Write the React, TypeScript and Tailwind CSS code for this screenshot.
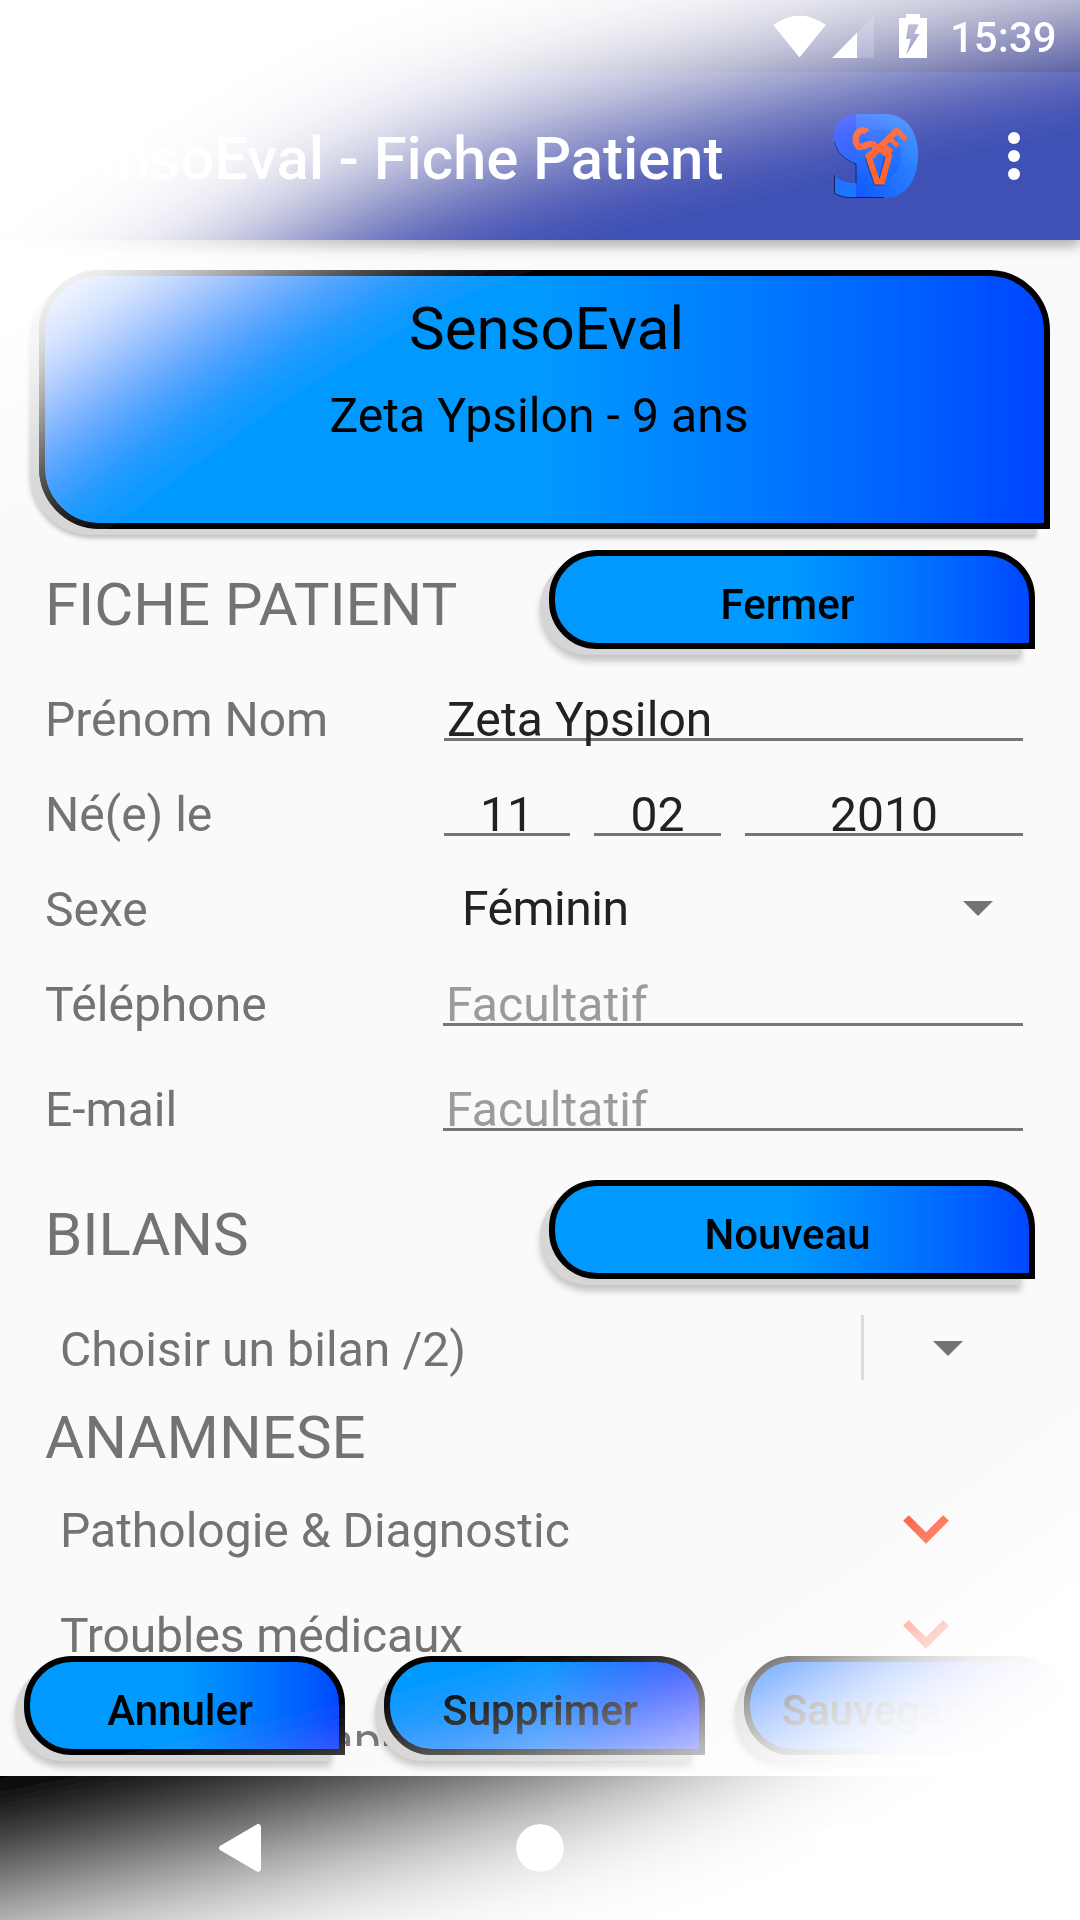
import type { ReactNode } from "react";

const WIDTH = 1080;
const HEIGHT = 1920;
const STRIP = 40;

// edge of the light falling on the bottom right corner, the top left one mirrors it
const GLOW_EDGE = [
  [-240, 1975],
  [0, 1930],
  [250, 1880],
  [540, 1812],
  [710, 1755],
  [900, 1640],
  [1080, 1508],
  [1320, 1325],
];

function edgeAt(x: number) {
  let i = 0;
  while (i < GLOW_EDGE.length - 2 && GLOW_EDGE[i + 1][0] < x) i++;
  const [x0, y0] = GLOW_EDGE[i];
  const [x1, y1] = GLOW_EDGE[i + 1];
  return y0 + ((x - x0) / (x1 - x0)) * (y1 - y0);
}

const strips = Array.from({ length: 39 }, (_, i) => {
  const x = -240 + i * STRIP;
  return { x, y: edgeAt(x + STRIP / 2) };
});

function GlowFilter() {
  return (
    <svg className="absolute h-0 w-0" aria-hidden="true">
      <filter
        id="glow"
        filterUnits="userSpaceOnUse"
        primitiveUnits="userSpaceOnUse"
        x={-240}
        y={-240}
        width={WIDTH + 480}
        height={HEIGHT + 480}
        colorInterpolationFilters="linearRGB"
      >
        {strips.map(({ x, y }) => (
          <feFlood key={`b${x}`} result={`b${x}`} x={x} y={y} width={STRIP} height={HEIGHT + 240 - y} floodColor="#fff" />
        ))}
        {strips.map(({ x, y }) => (
          <feFlood key={`t${x}`} result={`t${x}`} x={WIDTH - x - STRIP} y={-240} width={STRIP} height={HEIGHT - y + 240} floodColor="#fff" />
        ))}
        <feMerge result="shape">
          {strips.map(({ x }) => (
            <feMergeNode key={`b${x}`} in={`b${x}`} />
          ))}
          {strips.map(({ x }) => (
            <feMergeNode key={`t${x}`} in={`t${x}`} />
          ))}
        </feMerge>
        <feGaussianBlur in="shape" stdDeviation={61} result="light" />
        <feMerge>
          <feMergeNode in="SourceGraphic" />
          <feMergeNode in="light" />
        </feMerge>
      </filter>
    </svg>
  );
}

function StatusBar() {
  return (
    <div className="flex h-[72px] items-center bg-[#303f9f] pl-[773px] text-white">
      <svg className="h-[44px] w-[53px]" viewBox="0 0 53 44" fill="currentColor">
        <path d="M0 11Q26.500 -8 53 11L26.500 43.500Z" />
      </svg>
      <svg className="ml-[6px] h-[44px] w-[42px]" viewBox="0 0 42 44" fill="currentColor">
        <path d="M42 1V44H0Z" opacity=".3" />
        <path d="M25 18.500V44H0Z" />
      </svg>
      <svg className="ml-[25px] h-[44px] w-[28px]" viewBox="0 0 28 44" fill="currentColor" fillRule="evenodd">
        <path d="M7 0H21V4H28V44H0V4H7ZM9.500 10.500L7 25H12L7.500 40L20.500 20H15L19.500 10.500Z" />
      </svg>
      <span className="ml-[23px] pt-[3px] text-[42px] leading-[60px] font-medium">15:39</span>
    </div>
  );
}

function Logo() {
  return (
    <svg className="h-[84px] w-[84px]" viewBox="0 0 84 84">
      <defs>
        <linearGradient id="logoS" x1="0" y1="0" x2="0" y2="1">
          <stop offset="0" stopColor="#2450ff" />
          <stop offset="1" stopColor="#1f78ff" />
        </linearGradient>
        <linearGradient id="logoD" x1="1" y1="0" x2="0" y2="1">
          <stop offset="0" stopColor="#3a96ff" />
          <stop offset="1" stopColor="#1158ff" />
        </linearGradient>
      </defs>
      <path d="M22 0C8 1 0 10 0 23C0 38 10 45 22 50V69C13 69 6 67 0 61V79Q6 84 22 84Z" fill="url(#logoS)" />
      <path d="M22 0H51C72 0 84 17 84 41C84 65 72 84 51 84H22Z" fill="url(#logoD)" />
      <path d="M.5 28C3 40 12 46 22 50V69M.5 61V79Q7 83.500 16 83.500H50" fill="none" stroke="#14235f" />
      <path d="M18 26C16 18 24 15 34 15H49C61 17 67 28 67 42C67 54 60 64 47 68V40Z" fill="#1468ff" opacity=".6" />
      <g fill="none" stroke="#14235f" opacity=".5" transform="translate(-1 1)">
        <path d="M34.500 42L43 67.500H48L54.500 42" strokeWidth="6" />
      </g>
      <g fill="none" stroke="#ff6530">
        <path d="M33 18C29 13 20 19 22 28C25 40 34 26 40 31C44 35 40 39 37 43" strokeWidth="6.500" />
        <path d="M40 39L64 15.500" strokeWidth="6.500" />
        <path d="M61.500 15L72 25.500M54 23L64 32M47 30L58 38" strokeWidth="5" />
        <path d="M34.500 42L43 67.500H48L55 42L45 34Z" strokeWidth="6" />
      </g>
    </svg>
  );
}

function AppBar() {
  return (
    <header className="relative z-10 flex h-[168px] items-center bg-[#3f51b5] pl-[48px] text-white shadow-[0_6px_12px_rgba(0,0,0,0.3)]">
      <h1 className="w-[786px] pt-[5px] text-[60px] leading-[72px] font-medium tracking-[-0.12px]">SensoEval - Fiche Patient</h1>
      <Logo />
      <div className="ml-[90px] flex flex-col gap-[6px]">
        <i className="h-3 w-3 rounded-full bg-white" />
        <i className="h-3 w-3 rounded-full bg-white" />
        <i className="h-3 w-3 rounded-full bg-white" />
      </div>
    </header>
  );
}

function Pill({ children }: { children: ReactNode }) {
  return (
    <button className="relative block h-[105px] w-full pb-[6px] pl-[9px] text-black">
      <span className="absolute top-[9px] right-[14px] bottom-0 left-0 rounded-[48px] rounded-br-none bg-[#d6d6d6] shadow-[0_6px_7px_rgba(0,0,0,0.22)]" />
      <span className="relative flex h-[99px] items-center justify-center rounded-[48px] rounded-br-none border-[6px] border-black bg-linear-to-r from-[#0099ff] via-[#0099ff] via-50% to-[#0044ff] bg-origin-border pt-[11px] pr-[9px] text-[42px] leading-[50px] font-medium">
        {children}
      </span>
    </button>
  );
}

function PatientCard() {
  return (
    <section className="relative pb-[6px] pl-[9px]">
      <div className="absolute top-[9px] right-[14px] bottom-0 left-0 rounded-[61px] rounded-br-none bg-[#d6d6d6] shadow-[0_3px_5px_rgba(0,0,0,0.25)]" />
      <div className="relative flex h-[259px] flex-col items-center rounded-[61px] rounded-br-none border-[6px] border-black bg-linear-to-r from-[#0099ff] via-[#0099ff] via-50% to-[#0044ff] pt-[23px] text-black">
        <h2 className="pl-[4px] text-[60px] leading-[60px]">SensoEval</h2>
        <p className="mt-[27px] pr-[11px] text-[48px] leading-[60px] tracking-[0.08px]">Zeta Ypsilon - 9 ans</p>
      </div>
    </section>
  );
}

function SectionHeader({ title, action }: { title: string; action: string }) {
  return (
    <div className="flex h-[105px] justify-between pr-[45px] pl-[45px]">
      <h3 className="pt-[25px] text-[60px] leading-[60px] tracking-[-0.1px]">{title}</h3>
      <div className="w-[495px]">
        <Pill>{action}</Pill>
      </div>
    </div>
  );
}

function Field({ label, children }: { label: string; children: ReactNode }) {
  return (
    <div className="flex h-[60px] pr-[57px] pl-[45px] text-[48px] leading-[60px]">
      <label className="w-[399px]">{label}</label>
      <div className="flex flex-1 gap-[24px]">{children}</div>
    </div>
  );
}

function Placeholder() {
  return <div className="-ml-px h-[51px] flex-1 border-b-[3px] border-[#757575] pl-[3px] tracking-[0.08px] text-[#9b9b9b]">Facultatif</div>;
}

function Caret() {
  return (
    <svg className="h-[15px] w-[30px]" viewBox="0 0 30 15">
      <path d="M0 0H30L15 15Z" fill="#737373" />
    </svg>
  );
}

function Topic({ children }: { children: ReactNode }) {
  return (
    <div className="flex h-[60px] shrink-0 justify-between pr-[131px] pl-[60px] text-[48px] leading-[60px]">
      <span>{children}</span>
      <svg className="mt-[14px] h-[29px] w-[46px]" viewBox="0 0 46 29">
        <path d="M3 3L23 23L43 3" fill="none" stroke="#ff5722" strokeWidth="8" />
      </svg>
    </div>
  );
}

function BottomActions() {
  return (
    <div className="absolute inset-x-0 bottom-[159px] flex gap-[30px] px-[15px]">
      <Pill>Annuler</Pill>
      <Pill>Supprimer</Pill>
      <Pill>Sauvegarder</Pill>
    </div>
  );
}

function NavigationBar() {
  return (
    <nav className="flex h-[144px] items-center bg-black pl-[219px]">
      <svg className="h-[48px] w-[42px]" viewBox="0 0 42 48">
        <path d="M3 24L39 3V45Z" fill="#fff" stroke="#fff" strokeWidth="6" strokeLinejoin="round" />
      </svg>
      <i className="ml-[255px] h-[48px] w-[48px] rounded-full bg-white" />
      <i className="ml-[255px] h-[42px] w-[42px] rounded-sm bg-white" />
    </nav>
  );
}

export default function App() {
  return (
    <>
      <GlowFilter />
      <div className="relative flex h-[1920px] w-[1080px] flex-col overflow-hidden bg-[#fafafa] font-[Roboto,sans-serif] text-[#737373] filter-[url(#glow)]">
        <StatusBar />
        <AppBar />
        <main className="h-[1506px] overflow-hidden pt-[30px]">
          <div className="mr-[30px] ml-[30px]">
            <PatientCard />
          </div>

          <div className="mt-[15px]">
            <SectionHeader title="FICHE PATIENT" action="Fermer" />
          </div>

          <div className="mt-[35px] flex flex-col gap-[35px]">
            <Field label="Prénom Nom">
              <div className="h-[51px] flex-1 border-b-[3px] border-[#757575] pl-[3px] tracking-[0.1px] text-[#212121]">Zeta Ypsilon</div>
            </Field>
            <Field label="Né(e) le">
              <div className="h-[51px] w-[126px] border-b-[3px] border-[#757575] text-center text-[#212121]">11</div>
              <div className="h-[51px] w-[127px] border-b-[3px] border-[#757575] text-center text-[#212121]">02</div>
              <div className="h-[51px] flex-1 border-b-[3px] border-[#757575] text-center text-[#212121]">2010</div>
            </Field>
            <Field label="Sexe">
              <div className="-mt-[3px] flex flex-1 items-center justify-between pr-[30px] pl-[18px] text-[#212121]">
                <span className="tracking-[-0.5px]">Féminin</span>
                <Caret />
              </div>
            </Field>
            <Field label="Téléphone">
              <Placeholder />
            </Field>
          </div>
          <div className="mt-[45px]">
            <Field label="E-mail">
              <Placeholder />
            </Field>
          </div>

          <div className="mt-[40px]">
            <SectionHeader title="BILANS" action="Nouveau" />
          </div>
          <div className="mt-[30px] flex h-[65px] items-center pl-[60px] text-[48px] leading-[60px]">
            <span className="w-[801px] pt-[5px] tracking-[0.08px]">Choisir un bilan /2)</span>
            <i className="mr-[69px] h-[65px] w-[3px] bg-[#dcdcdc]" />
            <div className="flex pt-[2px]">
              <Caret />
            </div>
          </div>

          <h3 className="mt-[28px] pl-[45px] text-[60px] leading-[60px]">ANAMNESE</h3>
          <div className="mt-[33px] flex flex-col gap-[45px]">
            <Topic>Pathologie &amp; Diagnostic</Topic>
            <Topic>
              <span className="tracking-[-0.12px]">Troubles médicaux</span>
            </Topic>
            <Topic>Traitements appareils</Topic>
          </div>
        </main>
        <div className="h-[30px]" />
        <NavigationBar />
        <BottomActions />
      </div>
    </>
  );
}
